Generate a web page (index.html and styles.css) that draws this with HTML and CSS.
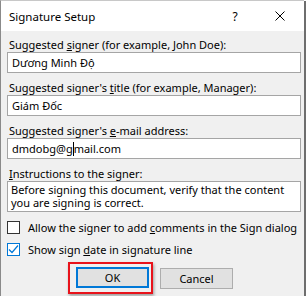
FILE: index.html
```html
<!DOCTYPE html>
<html lang="en">
<head>
    <meta charset="UTF-8">
    <title>Signature Setup</title>
    <link rel="stylesheet" href="styles.css">
</head>
<body>
    <div class="dialog">
        <div class="titlebar">
            <span class="title">Signature Setup</span>
            <span class="help">?</span>
            <span class="close">
                <svg width="10" height="10" viewBox="0 0 10 10">
                    <path d="M0.5 0.5 L9.5 9.5 M9.5 0.5 L0.5 9.5" stroke="#000" stroke-width="1" fill="none"/>
                </svg>
            </span>
        </div>

        <div class="content">
            <div class="field-label">Suggested <u>s</u>igner (for example, John Doe):</div>
            <div class="textbox">Dương Minh Độ</div>

            <div class="field-label">Suggested signer's <u>t</u>itle (for example, Manager):</div>
            <div class="textbox">Giám Đốc</div>

            <div class="field-label">Suggested signer's <u>e</u>-mail address:</div>
            <div class="textbox">dmdobg@g<span class="caret"></span>mail.com</div>

            <div class="field-label"><u>I</u>nstructions to the signer:</div>
            <div class="textbox multiline">
                <div class="line">Before signing this document, verify that the content</div>
                <div class="line">you are signing is correct.</div>
            </div>

            <div class="check-row first">
                <span class="checkbox"></span>
                <span>Allow the signer to add <u>c</u>omments in the Sign dialog</span>
            </div>
            <div class="check-row">
                <span class="checkbox checked">
                    <svg width="11" height="11" viewBox="0 0 11 11">
                        <path d="M1 5.5 L4 8.5 L10 1.5" stroke="#0078d7" stroke-width="1.2" fill="none"/>
                    </svg>
                </span>
                <span>Show sign <u>d</u>ate in signature line</span>
            </div>

            <div class="buttons">
                <div class="highlight">
                    <div class="btn btn-default">OK</div>
                </div>
                <div class="btn">Cancel</div>
            </div>
        </div>
    </div>
</body>
</html>
```

FILE: styles.css
```css
body {
    margin: 0;
    background-color: #ffffff;
    font-family: "Noto Sans", "Open Sans", sans-serif;
    font-size: 11px;
    color: #000;
}
.dialog {
    width: 303px;
    height: 295px;
    background-color: #f0f0f0;
    border-top: 1px solid #c8c8c8;
    border-left: 1px solid #8a8a8a;
    box-shadow: 2px 1px 0 #6e6e6e;
}
.titlebar {
    height: 30px;
    background: #ffffff;
    display: flex;
    align-items: center;
}
.title {
    font-size: 11.5px;
    margin-left: 8px;
    flex: 1;
}
.help {
    width: 10px;
    margin-right: 35px;
    text-align: center;
    font-size: 12px;
}
.close {
    width: 10px;
    margin-right: 19px;
    display: flex;
}
.content {
    padding: 7px 3px 0 6px;
}
.field-label {
    height: 14px;
    line-height: 14px;
    margin-left: 2px;
}
.textbox {
    height: 19px;
    line-height: 19px;
    background: #ffffff;
    border: 1px solid #a5a5a5;
    padding: 0 4px;
    margin-bottom: 8px;
    white-space: nowrap;
}
.caret {
    display: inline-block;
    width: 1px;
    height: 14px;
    background: #000;
    vertical-align: -3px;
}
.textbox.multiline {
    height: 28px;
    line-height: 13px;
    padding: 1px 3px 0 3px;
    margin-bottom: 0;
}
.line {
    height: 13px;
}
.check-row {
    display: flex;
    align-items: center;
    height: 22px;
}
.check-row.first {
    margin-top: 4px;
}
.checkbox {
    width: 11px;
    height: 11px;
    border: 1px solid #333333;
    background: #ffffff;
    margin-right: 8px;
    display: flex;
    align-items: center;
    justify-content: center;
}
.checkbox.checked {
    border-color: #0078d7;
}
.buttons {
    display: flex;
    align-items: center;
    margin-top: 2px;
    margin-left: 61px;
}
.highlight {
    border: 2px solid #e8131b;
    padding: 3px 2px 4px 6px;
    box-shadow: 1px 2px 3px rgba(0, 0, 0, 0.35);
}
.btn {
    width: 71px;
    height: 19px;
    line-height: 19px;
    text-align: center;
    background: #e1e1e1;
    border: 1px solid #adadad;
    margin-left: 7px;
}
.btn-default {
    margin-left: 0;
    width: 69px;
    height: 17px;
    line-height: 17px;
    border: 2px solid #0078d7;
}
```
